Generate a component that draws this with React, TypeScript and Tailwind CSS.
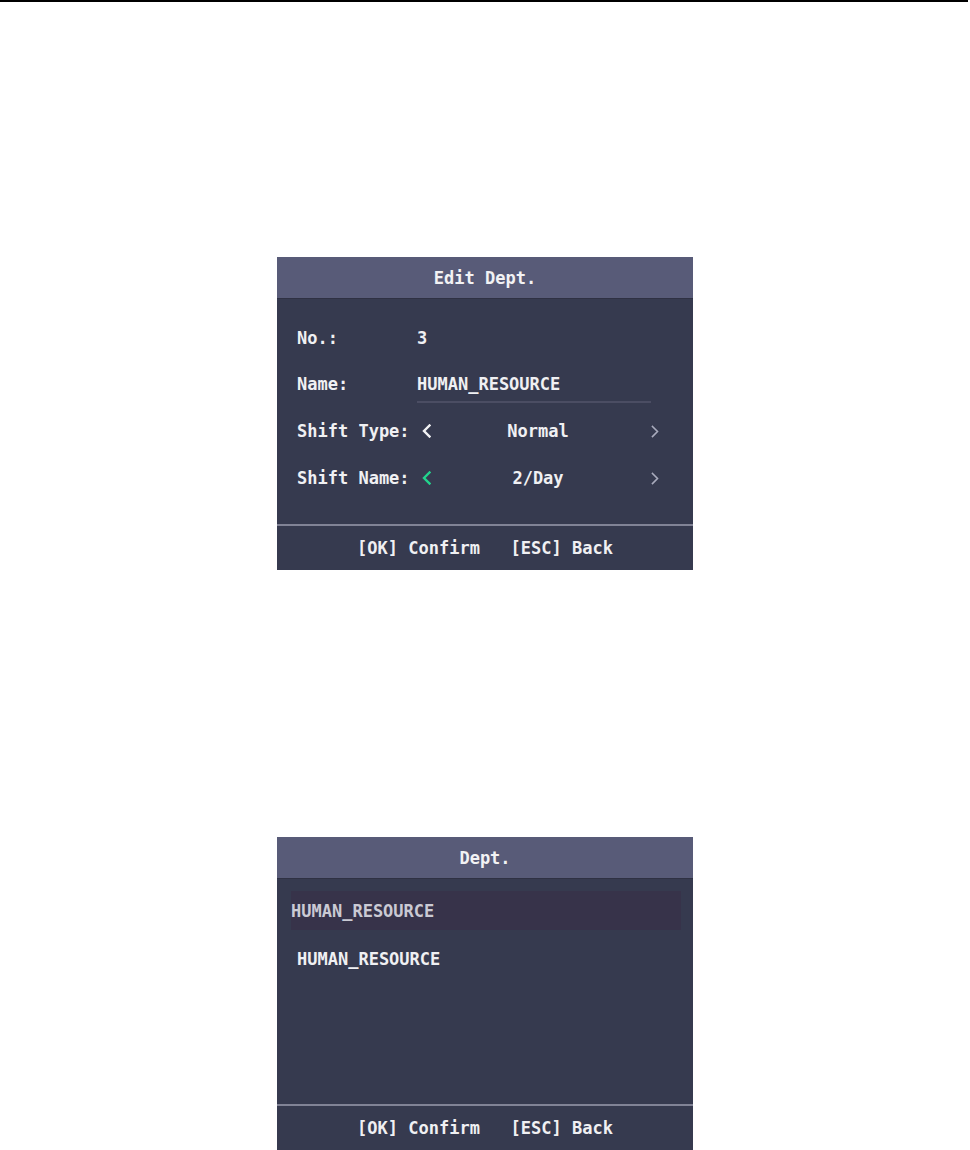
import React from "react";

const mono = { fontFamily: '"DejaVu Sans Mono", "Liberation Mono", monospace' };

function ChevronLeft({ color, className }: { color: string; className?: string }) {
  return (
    <svg width="9" height="14" viewBox="0 0 9 14" className={className}>
      <polyline points="7.5,1.5 2,7 7.5,12.5" fill="none" stroke={color} strokeWidth="2.4" strokeLinecap="square" strokeLinejoin="miter" />
    </svg>
  );
}

function ChevronRight({ className }: { className?: string }) {
  return (
    <svg width="8" height="13" viewBox="0 0 8 13" className={className}>
      <polyline points="1.5,1.5 6.5,6.5 1.5,11.5" fill="none" stroke="#a9abbd" strokeWidth="1.6" strokeLinecap="square" />
    </svg>
  );
}

function Header({ title }: { title: string }) {
  return (
    <div className="flex h-[42px] items-center justify-center border-b border-[#2f3143] bg-[#585b78] text-[17px] font-bold leading-[20px] text-[#f2f2f4]">
      {title}
    </div>
  );
}

function Footer() {
  return (
    <div className="flex flex-col">
      <div className="h-[2px] bg-[#818396]" />
      <div className="flex h-[43px] items-center justify-center whitespace-pre text-[17px] font-bold leading-[20px] text-[#f0f0f3]">
        {"[OK] Confirm   [ESC] Back"}
      </div>
    </div>
  );
}

function EditDept() {
  return (
    <div className="mx-auto flex h-[313px] w-[416px] flex-col bg-[#363a4f]" style={mono}>
      <Header title="Edit Dept." />
      <div className="flex h-[225px] flex-col pl-[20px] pt-[16px] text-[17px] font-bold leading-[20px] text-[#f0f0f3]">
        <div className="flex h-[46px] items-center">
          <div className="w-[120px]">No.:</div>
          <div>3</div>
        </div>
        <div className="flex h-[46px] items-center">
          <div className="w-[120px]">Name:</div>
          <div className="flex w-[234px] flex-col pt-[9px]">
            <div>HUMAN_RESOURCE</div>
            <div className="mt-[7px] h-[2px] bg-[#4b4d63]" />
          </div>
        </div>
        <div className="flex h-[48px] items-center">
          <div className="w-[120px] whitespace-pre">Shift Type:</div>
          <div className="flex w-[20px] items-center">
            <ChevronLeft color="#f2f2f4" className="ml-[5px]" />
          </div>
          <div className="w-[202px] text-center">Normal</div>
          <ChevronRight className="ml-[12px]" />
        </div>
        <div className="flex h-[46px] items-center">
          <div className="w-[120px] whitespace-pre">Shift Name:</div>
          <div className="flex w-[20px] items-center">
            <ChevronLeft color="#22d38c" className="ml-[5px]" />
          </div>
          <div className="w-[202px] text-center">2/Day</div>
          <ChevronRight className="ml-[12px]" />
        </div>
      </div>
      <Footer />
    </div>
  );
}

function DeptList() {
  return (
    <div className="mx-auto flex h-[313px] w-[416px] flex-col bg-[#363a4f]" style={mono}>
      <Header title="Dept." />
      <div className="flex h-[225px] flex-col pt-[12px] text-[17px] font-bold leading-[20px]">
        <div className="ml-[14px] mr-[12px] flex h-[39px] items-center bg-[#37334a] text-[#cacad4]">
          HUMAN_RESOURCE
        </div>
        <div className="flex h-[58px] items-center pl-[20px] text-[#f0f0f3]">HUMAN_RESOURCE</div>
      </div>
      <Footer />
    </div>
  );
}

export default function App() {
  return (
    <div className="h-[1150px] w-full overflow-hidden bg-white">
      <div className="h-[2px] w-[968px] bg-black" />
      <div className="pt-[255px]">
        <EditDept />
      </div>
      <div className="pt-[267px]">
        <DeptList />
      </div>
    </div>
  );
}
